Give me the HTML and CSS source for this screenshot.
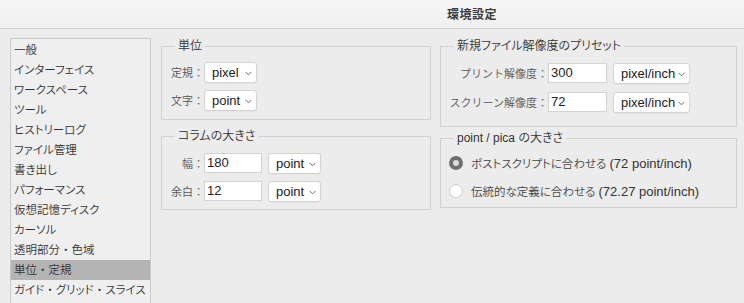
FILE: index.html
```html
<!DOCTYPE html>
<html lang="ja">
<head>
<meta charset="utf-8">
<title>環境設定</title>
<link rel="stylesheet" href="styles.css">
</head>
<body>
<div class="window">
  <div class="titlebar"><span class="title">環境設定</span></div>
  <div class="content">
    <ul class="sidebar">
      <li>一般</li>
      <li>インターフェイス</li>
      <li>ワークスペース</li>
      <li>ツール</li>
      <li>ヒストリーログ</li>
      <li>ファイル管理</li>
      <li>書き出し</li>
      <li>パフォーマンス</li>
      <li>仮想記憶ディスク</li>
      <li>カーソル</li>
      <li>透明部分<span class="dot">・</span>色域</li>
      <li class="selected">単位<span class="dot">・</span>定規</li>
      <li>ガイド<span class="dot">・</span>グリッド<span class="dot">・</span>スライス</li>
    </ul>

    <div class="col col-left">
      <fieldset class="group g-units">
        <legend>単位</legend>
        <div class="row">
          <span class="lbl lbl-units">定規：</span>
          <div class="select w-pixel"><span>pixel</span><svg class="chev" width="7" height="5" viewBox="0 0 7 5"><polyline points="0.5,0.8 3.5,3.8 6.5,0.8" fill="none" stroke="#6b6b6b" stroke-width="1"/></svg></div>
        </div>
        <div class="row">
          <span class="lbl lbl-units">文字：</span>
          <div class="select w-point"><span>point</span><svg class="chev" width="7" height="5" viewBox="0 0 7 5"><polyline points="0.5,0.8 3.5,3.8 6.5,0.8" fill="none" stroke="#6b6b6b" stroke-width="1"/></svg></div>
        </div>
      </fieldset>

      <fieldset class="group g-column">
        <legend>コラムの大きさ</legend>
        <div class="row">
          <span class="lbl lbl-column">幅：</span>
          <div class="input w-col-input">180</div>
          <div class="select w-point"><span>point</span><svg class="chev" width="7" height="5" viewBox="0 0 7 5"><polyline points="0.5,0.8 3.5,3.8 6.5,0.8" fill="none" stroke="#6b6b6b" stroke-width="1"/></svg></div>
        </div>
        <div class="row">
          <span class="lbl lbl-column">余白：</span>
          <div class="input w-col-input">12</div>
          <div class="select w-point"><span>point</span><svg class="chev" width="7" height="5" viewBox="0 0 7 5"><polyline points="0.5,0.8 3.5,3.8 6.5,0.8" fill="none" stroke="#6b6b6b" stroke-width="1"/></svg></div>
        </div>
      </fieldset>
    </div>

    <div class="col col-right">
      <fieldset class="group g-res">
        <legend>新規ファイル解像度のプリセット</legend>
        <div class="row">
          <span class="lbl lbl-res">プリント解像度：</span>
          <div class="input w-res-input">300</div>
          <div class="select w-ppi"><span>pixel/inch</span><svg class="chev" width="7" height="5" viewBox="0 0 7 5"><polyline points="0.5,0.8 3.5,3.8 6.5,0.8" fill="none" stroke="#6b6b6b" stroke-width="1"/></svg></div>
        </div>
        <div class="row">
          <span class="lbl lbl-res">スクリーン解像度：</span>
          <div class="input w-res-input">72</div>
          <div class="select w-ppi"><span>pixel/inch</span><svg class="chev" width="7" height="5" viewBox="0 0 7 5"><polyline points="0.5,0.8 3.5,3.8 6.5,0.8" fill="none" stroke="#6b6b6b" stroke-width="1"/></svg></div>
        </div>
      </fieldset>

      <fieldset class="group g-pica">
        <legend>point / pica の大きさ</legend>
        <div class="row">
          <span class="radio checked"></span>
          <span class="radio-text">ポストスクリプトに合わせる <span class="latin">(72 point/inch)</span></span>
        </div>
        <div class="row">
          <span class="radio"></span>
          <span class="radio-text">伝統的な定義に合わせる <span class="latin">(72.27 point/inch)</span></span>
        </div>
      </fieldset>
    </div>
  </div>
</div>
</body>
</html>
```
FILE: styles.css
```css
* { box-sizing: border-box; }

html, body {
  margin: 0;
  padding: 0;
  width: 744px;
  height: 303px;
  overflow: hidden;
  background: #ececec;
  font-family: "Liberation Sans", "Noto Sans CJK JP", sans-serif;
  color: #333;
}

.window {
  width: 744px;
  height: 303px;
  overflow: hidden;
}

.titlebar {
  height: 29px;
  background: linear-gradient(#f6f6f6, #f0f0f0);
  border-bottom: 1px solid #d2d2d2;
  display: flex;
  align-items: center;
  padding-left: 447px;
}

.title {
  font-size: 12px;
  font-weight: 600;
  color: #3c3c3c;
  letter-spacing: 0.5px;
  padding-bottom: 1px;
}

.content {
  display: flex;
  align-items: flex-start;
  padding: 9px 0 0 10px;
}

.sidebar {
  list-style: none;
  margin: 0;
  padding: 1px 0 0 0;
  width: 141px;
  height: 300px;
  border: 1px solid #c9c9c9;
  background: #efefef;
  font-size: 11.5px;
  font-weight: 350;
  font-feature-settings: "palt";
  color: #333;
}

.sidebar li {
  height: 20px;
  line-height: 20px;
  padding-left: 3px;
  white-space: nowrap;
}

.sidebar .dot {
  font-feature-settings: normal;
}

.sidebar li.selected {
  background: #b4b4b4;
}

.col {
  display: flex;
  flex-direction: column;
}

.col-left {
  width: 270px;
  margin-left: 10px;
}

.col-right {
  width: 297px;
  margin-left: 9px;
}

.group {
  margin: 0;
  border: 1px solid #d0d0d0;
  padding: 0 8px;
  display: flex;
  flex-direction: column;
  min-width: 0;
}

.group legend {
  padding: 0 3px;
  margin-left: 5px;
  font-size: 12px;
  line-height: 16px;
  height: 16px;
  color: #333;
  font-weight: 350;
  font-feature-settings: "palt";
}

.g-units { padding-top: 8px; padding-bottom: 9px; gap: 8px; }
.g-column { margin-top: 8px; padding-top: 9px; padding-bottom: 8px; gap: 8px; }
.g-res { padding-top: 9px; padding-bottom: 14px; gap: 9px; }
.g-pica { margin-top: 3px; padding-top: 7px; padding-bottom: 6px; gap: 8px; }

.row {
  display: flex;
  align-items: center;
  height: 20px;
}

.lbl {
  font-size: 11px;
  font-weight: 350;
  color: #555;
  text-align: right;
  white-space: nowrap;
}

.lbl-units { width: 34px; }
.lbl-column { width: 34px; }
.lbl-res { width: 99px; }

.select {
  height: 21px;
  background: #fff;
  border: 1px solid #d3d3d3;
  border-radius: 3px;
  display: flex;
  align-items: center;
  justify-content: space-between;
  padding: 0 4px 0 7px;
  font-size: 13px;
  color: #222;
  box-shadow: 0 0.5px 0.5px rgba(0, 0, 0, 0.06);
}

.chev { margin-top: 2px; }

.w-pixel { width: 53px; }
.w-point { width: 53px; }
.w-ppi { width: 77px; }

.input {
  height: 20px;
  background: #fff;
  border: 1px solid #d3d3d3;
  font-size: 13px;
  color: #222;
  padding-left: 2px;
  line-height: 18px;
  margin-right: 6px;
}

.w-col-input { width: 58px; }
.w-res-input { width: 59px; }

.radio {
  width: 14px;
  height: 14px;
  border-radius: 50%;
  background: #fff;
  border: 1px solid #cfcfcf;
  margin-right: 8px;
  flex: none;
}

.radio.checked {
  background: #dcdcdc;
  border: 4px solid #707070;
}

.radio-text {
  font-size: 11.5px;
  font-weight: 350;
  color: #444;
  white-space: nowrap;
  font-feature-settings: "palt";
}

.latin {
  font-size: 13px;
  font-weight: 400;
  color: #333;
}
```
